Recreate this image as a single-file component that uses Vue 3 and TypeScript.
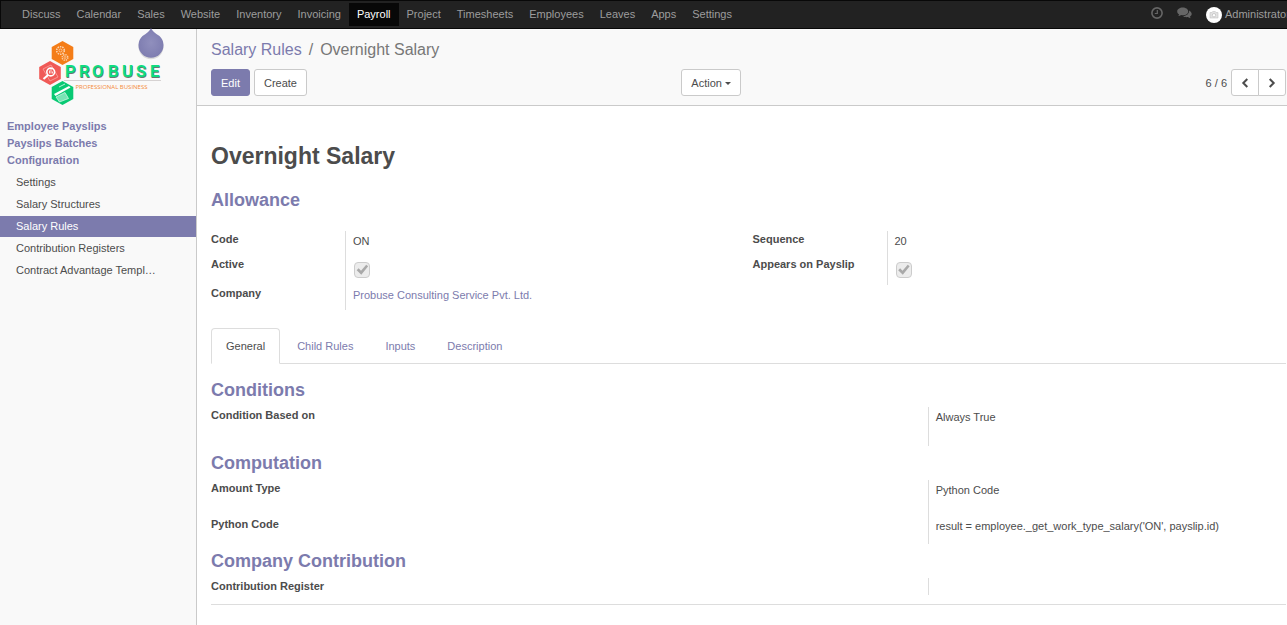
<script setup lang="ts">
import { ref } from 'vue'

const apps = [
  'Discuss', 'Calendar', 'Sales', 'Website', 'Inventory', 'Invoicing', 'Payroll',
  'Project', 'Timesheets', 'Employees', 'Leaves', 'Apps', 'Settings',
]
const sections = ['Employee Payslips', 'Payslips Batches', 'Configuration']
const menu = [
  'Settings', 'Salary Structures', 'Salary Rules', 'Contribution Registers',
  'Contract Advantage Templ…',
]
const tabs = ['General', 'Child Rules', 'Inputs', 'Description']
const activeTab = ref('General')
</script>

<template>
  <div class="page">
    <header class="navbar">
      <nav class="apps">
        <a v-for="app in apps" :key="app" href="#" :class="{ active: app === 'Payroll' }">{{ app }}</a>
      </nav>
      <div class="systray">
        <button class="tray" type="button" aria-label="Activities">
          <svg width="12" height="12" viewBox="0 0 12 12" fill="none" stroke="currentColor">
            <circle cx="6" cy="6" r="5.1" stroke-width="1.6" />
            <path d="M6.3 3v3.5H3.8" stroke-width="1.2" />
          </svg>
        </button>
        <button class="tray" type="button" aria-label="Conversations">
          <svg width="15" height="12" viewBox="0 0 15 12" fill="currentColor">
            <path d="M5.700.6C2.600.6.200 2.300.200 4.500c0 1.200.8 2.300 2 3-.2.700-.6 1.100-1 1.600 1.200-.1 2.200-.5 3-1.100.5.1 1 .2 1.500.2 3.100 0 5.500-1.700 5.500-3.800S8.800.6 5.700.6z" />
            <path d="M12.100 3.400c.3 3.200-2.600 5.400-6.100 5.600.9.800 2.200 1.200 3.600 1.200.5 0 .9 0 1.300-.1.800.6 1.800 1 2.900 1.100-.4-.5-.8-.9-.9-1.500 1.100-.6 1.800-1.500 1.800-2.600 0-1.600-1.100-2.900-2.600-3.700z" />
          </svg>
        </button>
        <a class="user" href="#">
          <svg width="16" height="16" viewBox="0 0 16 16">
            <circle cx="8" cy="8" r="8" fill="#fff" />
            <path d="M4 5.500h2l.7-1h2.600l.7 1h2v5.500H4z" fill="#e2e2e2" stroke="#c4c4c4" stroke-width=".6" />
            <circle cx="8" cy="8.200" r="1.700" fill="#fff" stroke="#bbb" stroke-width=".7" />
          </svg>
          <span>Administrator</span>
        </a>
      </div>
    </header>

    <div class="body">
      <aside class="sidebar">
        <svg class="drop" width="30" height="34" viewBox="0 0 30 34" aria-hidden="true">
          <defs>
            <radialGradient id="drop-fill">
              <stop offset="0" stop-color="#908fbd" />
              <stop offset="1" stop-color="#7f7eb1" />
            </radialGradient>
          </defs>
          <path d="M15 1C16 5 19 7 23.500 9.500A12.500 12.500 0 1 1 6.500 9.500C11 7 14 5 15 1z" fill="#000" opacity=".12" />
          <path d="M15 0C16 3 19 5 23.500 8A12.500 12.500 0 1 1 6.500 8C11 5 14 3 15 0z" fill="url(#drop-fill)" />
        </svg>
        <a class="logo" href="#" aria-label="Probuse">
          <svg width="126" height="68" viewBox="0 0 126 68">
            <path d="M25.500 3l10.800 6v12l-10.800 6-10.800-6V9z" fill="#f47d18" />
            <path d="M13 23l10.800 6v12L13 47 2.200 41V29z" fill="#f05a57" />
            <path d="M25.500 43l10.800 6v12l-10.800 6-10.800-6V49z" fill="#08c973" />
            <g fill="none" stroke="#fcd3ae">
              <circle cx="23.500" cy="12.500" r="3.800" stroke-width="1.600" stroke-dasharray="1.500 .9" />
              <circle cx="23.500" cy="12.500" r="1.500" stroke-width=".8" />
              <circle cx="28" cy="19.500" r="2.800" stroke-width="1.500" stroke-dasharray="1.300 .9" />
              <circle cx="28" cy="19.500" r="1" stroke-width=".7" />
            </g>
            <path d="M6 31l8-4 7 12-8 4z" fill="none" stroke="#f9a5a2" stroke-width=".8" />
            <circle cx="13.700" cy="34" r="3.900" fill="none" stroke="#fff" stroke-width="1.600" />
            <path d="M11 37l-4.500 4" stroke="#fff" stroke-width="2" />
            <path d="M12.500 35.500v-3M14 35.500V31M15.500 35.500v-2" stroke="#fff" stroke-width=".8" />
            <path d="M17 56l15-8 1.500 1.500-15 8.500z" fill="#fff" />
            <path d="M19 59l9-4.500 3.500 6-9 3.500z" fill="#78e4b5" stroke="#d8fbed" stroke-width=".7" />
            <path d="M22 49l6-3" stroke="#b8f1d8" stroke-width="1" />
            <g class="brand">
              <text x="28.500 42.500 55.500 71.500 85.500 99.500 113.500" y="39.700" fill="#6d7770">PROBUSE</text>
              <text x="28 42 55 71 85 99 113" y="39" fill="#0fdc80" aria-hidden="true">PROBUSE</text>
            </g>
            <path d="M27 42.500h97" stroke="#d6d2d2" />
            <text class="tagline" x="38.500" y="51" fill="#f58a36">PROFESSIONAL BUSINESS</text>
          </svg>
        </a>
        <nav class="sections">
          <a v-for="s in sections" :key="s" href="#">{{ s }}</a>
        </nav>
        <nav class="menu">
          <a v-for="m in menu" :key="m" href="#" :class="{ active: m === 'Salary Rules' }">{{ m }}</a>
        </nav>
      </aside>

      <main class="content">
        <div class="panel">
          <div class="breadcrumb">
            <a href="#">Salary Rules</a><span class="slash">/</span><span>Overnight Salary</span>
          </div>
          <div class="toolbar">
            <div class="actions">
              <button class="btn primary" type="button">Edit</button>
              <button class="btn" type="button">Create</button>
            </div>
            <div class="extras">
              <button class="btn" type="button">Action<i class="caret"></i></button>
              <div class="pager">
                <span>6 / 6</span>
                <div class="pair">
                  <button class="btn" type="button" aria-label="Previous">
                    <svg width="8" height="10" viewBox="0 0 8 10"><path d="M6.300 1L2.300 5l4 4" /></svg>
                  </button>
                  <button class="btn" type="button" aria-label="Next">
                    <svg width="8" height="10" viewBox="0 0 8 10"><path d="M1.700 1l4 4-4 4" /></svg>
                  </button>
                </div>
              </div>
            </div>
          </div>
        </div>

        <div class="sheet">
          <h1>Overnight Salary</h1>
          <h2>Allowance</h2>
          <div class="groups">
            <dl class="fields">
              <div class="row"><dt>Code</dt><dd>ON</dd></div>
              <div class="row">
                <dt><label for="active">Active</label></dt>
                <dd><input id="active" type="checkbox" checked disabled></dd>
              </div>
              <div class="row"><dt>Company</dt><dd><a href="#">Probuse Consulting Service Pvt. Ltd.</a></dd></div>
            </dl>
            <dl class="fields">
              <div class="row"><dt>Sequence</dt><dd>20</dd></div>
              <div class="row">
                <dt><label for="appears">Appears on Payslip</label></dt>
                <dd><input id="appears" type="checkbox" checked disabled></dd>
              </div>
            </dl>
          </div>

          <div class="tabs" role="tablist">
            <button
              v-for="t in tabs" :key="t" type="button" role="tab"
              :aria-selected="t === activeTab" :class="{ active: t === activeTab }"
              @click="activeTab = t"
            >{{ t }}</button>
          </div>

          <section class="pane">
            <h2>Conditions</h2>
            <dl class="fields wide">
              <div class="row tall"><dt>Condition Based on</dt><dd>Always True</dd></div>
            </dl>
            <h2>Computation</h2>
            <dl class="fields wide">
              <div class="row"><dt>Amount Type</dt><dd>Python Code</dd></div>
              <div class="row last"><dt>Python Code</dt><dd>result = employee._get_work_type_salary('ON', payslip.id)</dd></div>
            </dl>
            <h2>Company Contribution</h2>
            <dl class="fields wide">
              <div class="row short"><dt>Contribution Register</dt><dd></dd></div>
            </dl>
          </section>
        </div>
      </main>
    </div>
  </div>
</template>

<style>
body {
  margin: 0;
  overflow-x: hidden;
}
</style>

<style scoped>
.page {
  display: flex;
  flex-direction: column;
  min-height: 100vh;
  font: 11px/16px "Liberation Sans", Arial, sans-serif;
  color: #4c4c4c;
  background: #fff;
}
.page * { box-sizing: border-box; }
a { color: #7c7bad; text-decoration: none; }
button { font: inherit; cursor: pointer; }
svg { display: block; flex: none; }

.navbar {
  display: flex;
  justify-content: space-between;
  height: 29px;
  background: #222;
  border: 1px solid #080808;
  border-right: 0;
  overflow: hidden;
}
.apps { display: flex; padding: 2px 0 2px 13px; }
.apps a { padding: 3px 8px 4px; color: #9d9d9d; }
.apps a.active { background: #080808; color: #fff; }
.systray { display: flex; align-items: center; width: 136px; flex: none; }
.tray { padding: 0 0 4px; border: 0; background: none; color: #666; margin-right: 14px; }
.user { display: flex; align-items: center; gap: 3px; color: #9d9d9d; white-space: nowrap; }
.user span { padding-bottom: 2px; }

.body { display: flex; flex: 1; }
.sidebar {
  position: relative;
  flex: none;
  width: 197px;
  background: #f9f9f9;
  border-right: 1px solid #cacaca;
}
.drop { position: absolute; left: 136px; top: -1px; }
.logo { display: block; padding: 9px 0 0 37px; }
.brand { font: bold 17px Roboto, sans-serif; }
.tagline { font: 6px "Open Sans", sans-serif; }
.sections { display: flex; flex-direction: column; padding: 12px 7px 0; }
.sections a { font-weight: bold; line-height: 17px; }
.menu { display: flex; flex-direction: column; gap: 1px; padding-top: 3px; }
.menu a { padding: 0 16px; line-height: 21px; color: #4c4c4c; }
.menu a.active { background: #7c7bad; color: #fff; }

.content { flex: 1; min-width: 0; }
.panel {
  padding: 11px 1px 9px 14px;
  background: #f9f9f9;
  border-bottom: 1px solid #cacaca;
}
.breadcrumb { font-size: 16px; line-height: 20px; color: #777; }
.slash { padding: 0 7px; }
.toolbar { display: grid; grid-template-columns: 7fr 9fr; margin-top: 9px; }
.actions { display: flex; gap: 4px; }
.extras { display: flex; justify-content: space-between; }
.btn {
  height: 27px;
  padding: 0 9px;
  border: 1px solid #cacaca;
  border-radius: 3px;
  background: #fff;
  color: #4c4c4c;
}
.btn.primary { background: #7c7bad; border-color: #7c7bad; color: #fff; }
.caret {
  display: inline-block;
  margin-left: 3px;
  vertical-align: middle;
  border: 3px solid transparent;
  border-top-color: #4c4c4c;
  border-bottom: 0;
}
.pager { display: flex; align-items: center; gap: 4px; }
.pair { display: flex; }
.pair .btn + .btn { margin-left: -1px; border-radius: 0 3px 3px 0; }
.pair .btn:first-child { border-radius: 3px 0 0 3px; }
.pair path { fill: none; stroke: #4c4c4c; stroke-width: 2; }

.sheet { padding: 34px 1px 20px 14px; }
h1 { margin: 0; font-size: 23px; line-height: 32px; }
h2 { margin: 0; font-size: 18px; line-height: 24px; color: #7c7bad; }
h1 + h2 { margin-top: 16px; }
.groups { display: grid; grid-template-columns: 1fr 1fr; gap: 8px; margin-top: 19px; align-items: start; }
.fields { margin: 0; }
.row { display: grid; grid-template-columns: 134px 1fr; min-height: 25px; }
dt { font-weight: bold; }
dd { margin: 0; padding: 2px 0 0 7px; border-left: 1px solid #ddd; }
.row:has(input) { min-height: 29px; }
.row:has(input) dd { padding: 6px 0 0 8px; }
input {
  display: block;
  appearance: none;
  width: 16px;
  height: 16px;
  margin: 0;
  border: 1px solid #ccc;
  border-radius: 4px;
  background: #ececec;
}
input::before {
  content: "";
  display: block;
  height: 100%;
  background: #a9a9a9;
  clip-path: polygon(12% 52%, 26% 38%, 43% 56%, 80% 12%, 94% 24%, 45% 84%);
}

.tabs { display: flex; gap: 2px; margin-top: 18px; border-bottom: 1px solid #ddd; }
.tabs button {
  margin-bottom: -1px;
  padding: 9px 14px;
  border: 1px solid transparent;
  border-radius: 4px 4px 0 0;
  background: none;
  color: #7c7bad;
}
.tabs .active { background: #fff; color: #4c4c4c; border-color: #ddd #ddd #fff; }

.pane { padding: 14px 0 4px; border-bottom: 1px solid #ddd; }
.wide { margin: 5px 0; }
.wide .row { grid-template-columns: 2fr 1fr; min-height: 36px; }
.wide .tall { min-height: 39px; }
.wide .last { min-height: 28px; }
.wide .short { min-height: 17px; }
</style>
